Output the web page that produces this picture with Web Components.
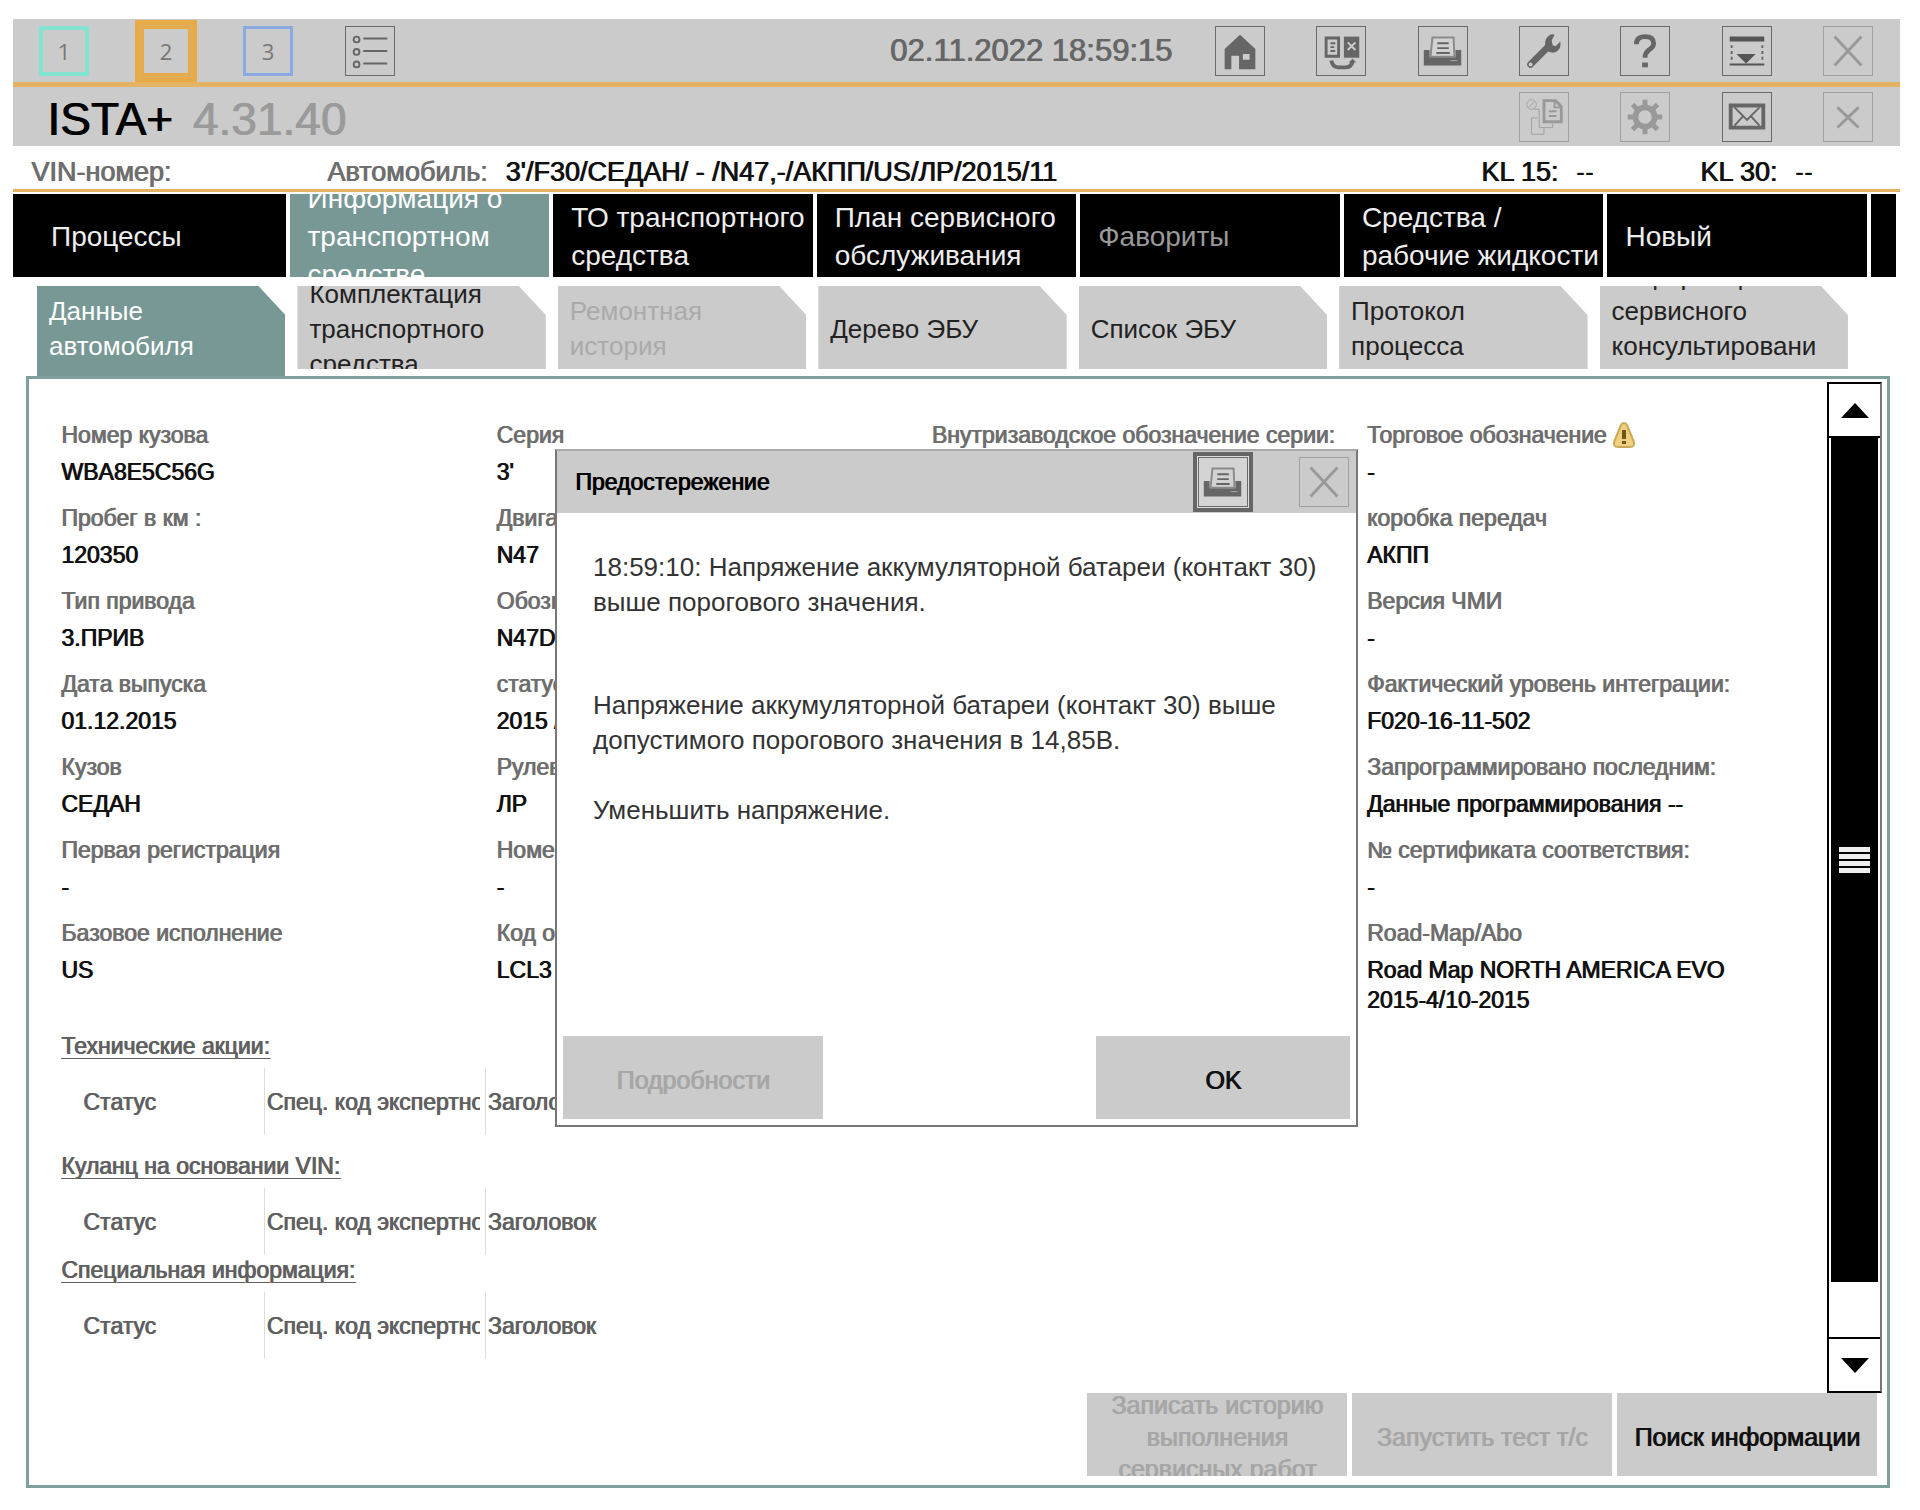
<!DOCTYPE html>
<html lang="ru">
<head>
<meta charset="utf-8">
<title>ISTA+</title>
<style>
:root{
  --grey:#cbcbcb; --teal:#789896; --orange:#e3b262; --label:#6e6e6e; --ink:#111; --off:#a6a6a6;
}
*{box-sizing:border-box}
body{margin:0;background:#fff;color:var(--ink);font:23px/30px "Liberation Sans",Arial,sans-serif}
</style>
</head>
<body>
<ista-app>
  <ista-titlebar slot="top"></ista-titlebar>
  <ista-brandbar slot="top" name="ISTA+" version="4.31.40"></ista-brandbar>
  <ista-vehicle slot="top"></ista-vehicle>
  <ista-nav slot="top">
    <nav-tile wide>Процессы</nav-tile>
    <nav-tile active>Информация о транспортном средстве</nav-tile>
    <nav-tile>ТО транспортного средства</nav-tile>
    <nav-tile>План сервисного обслуживания</nav-tile>
    <nav-tile off>Фавориты</nav-tile>
    <nav-tile>Средства / рабочие жидкости</nav-tile>
    <nav-tile>Новый</nav-tile>
    <nav-tile empty></nav-tile>
  </ista-nav>
  <ista-tabs slot="top">
    <ista-tab active>Данные автомобиля</ista-tab>
    <ista-tab>Комплектация транспортного средства</ista-tab>
    <ista-tab off>Ремонтная история</ista-tab>
    <ista-tab>Дерево ЭБУ</ista-tab>
    <ista-tab>Список ЭБУ</ista-tab>
    <ista-tab>Протокол процесса</ista-tab>
    <ista-tab>Информация сервисного консультирования</ista-tab>
  </ista-tabs>
  <ista-panel>
    <info-grid>
      <info-item label="Номер кузова">WBA8E5C56G</info-item>
      <info-item label="Серия">3'</info-item>
      <info-item label="Внутризаводское обозначение серии:"></info-item>
      <info-item label="Торговое обозначение" warn>-</info-item>

      <info-item label="Пробег в км :">120350</info-item>
      <info-item label="Двига">N47</info-item>
      <info-item></info-item>
      <info-item label="коробка передач">АКПП</info-item>

      <info-item label="Тип привода">3.ПРИВ</info-item>
      <info-item label="Обозн">N47D</info-item>
      <info-item></info-item>
      <info-item label="Версия ЧМИ">-</info-item>

      <info-item label="Дата выпуска">01.12.2015</info-item>
      <info-item label="статус">2015 /</info-item>
      <info-item></info-item>
      <info-item label="Фактический уровень интеграции:">F020-16-11-502</info-item>

      <info-item label="Кузов">СЕДАН</info-item>
      <info-item label="Рулев">ЛР</info-item>
      <info-item></info-item>
      <info-item label="Запрограммировано последним:">Данные программирования --</info-item>

      <info-item label="Первая регистрация">-</info-item>
      <info-item label="Номе">-</info-item>
      <info-item></info-item>
      <info-item label="№ сертификата соответствия:">-</info-item>

      <info-item label="Базовое исполнение">US</info-item>
      <info-item label="Код о">LCL3</info-item>
      <info-item></info-item>
      <info-item label="Road-Map/Abo">Road Map NORTH AMERICA EVO 2015-4/10-2015</info-item>
    </info-grid>
    <action-list heading="Технические акции:"></action-list>
    <action-list heading="Куланц на основании VIN:"></action-list>
    <action-list heading="Специальная информация:" tight></action-list>
    <ista-button slot="actions" off>Записать историю выполнения сервисных работ</ista-button>
    <ista-button slot="actions" off>Запустить тест т/с</ista-button>
    <ista-button slot="actions">Поиск информации</ista-button>
  </ista-panel>
  <warning-dialog slot="overlay" heading="Предостережение">
    <p>18:59:10: Напряжение аккумуляторной батареи (контакт 30) выше порогового значения.</p>
    <p>Напряжение аккумуляторной батареи (контакт 30) выше допустимого порогового значения в 14,85В.</p>
    <p>Уменьшить напряжение.</p>
  </warning-dialog>
</ista-app>

<script>
const BASE = `
*{box-sizing:border-box}
:host([hidden]){display:none}
button{font:inherit;color:inherit;margin:0;padding:0;border:0;background:none;border-radius:0;text-align:inherit}
svg{display:block}
.strong{text-shadow:1px 0 currentColor}
`;
function define(name, render){
  customElements.define(name, class extends HTMLElement{
    constructor(){ super(); this.attachShadow({mode:'open'}); }
    connectedCallback(){
      const t = document.createElement('template');
      t.innerHTML = render(this);
      const s = document.createElement('style');
      s.textContent = BASE;
      this.shadowRoot.replaceChildren(s, t.content.cloneNode(true));
    }
  });
}

const ICONS = {
  list:`<g fill="none" stroke="#666" stroke-width="2"><circle cx="11" cy="13" r="3"/><circle cx="11" cy="26" r="3"/><circle cx="11" cy="39" r="3"/><path d="M18 12h25M18 25h25M18 38h25"/></g>`,
  home:`<path fill="#666" fill-rule="evenodd" d="M25 8 41 23v21H24V30h-8v14H9V23zM28 28v6h7v-6z"/>`,
  docs:`<path fill="#666" fill-rule="evenodd" d="M8 10h16v22H8zM11 13v16h10V13z"/><path fill="#666" d="M28 10h16v22H28z"/><path d="M14 17h5M14 21h4M14 25h5" stroke="#666" stroke-width="2"/><path d="m32 16 8 8m0-8-8 8" stroke="#cbcbcb" stroke-width="2"/><path d="M15 35q1 7 7 7h7q7 0 8-6" fill="none" stroke="#666" stroke-width="4"/><path fill="#666" d="m33 37 4-4 4 4z"/>`,
  print:`<path fill="#666" d="M5 24h6v7h27v-7h6v16H5z"/><path fill="#d2d2d2" stroke="#8a8a8a" stroke-width="2" d="M14 11h22l1 20H12z"/><path d="M19 17h12M19 22h12M18 27h14" stroke="#666" stroke-width="2"/><path d="M33 35h7" stroke="#aaa"/>`,
  wrench:`<path d="M11 39 30 20" stroke="#666" stroke-width="7" stroke-linecap="round"/><path fill="#666" d="M27 24q-3-11 3-15 3-2 6-1l-3 6 1 5 3 1 5-5q1 7-3 10-5 4-12-1z"/><circle cx="11" cy="39" r="2" fill="#cbcbcb"/>`,
  help:`<path d="M16 18q0-8 9-8t9 7q0 4-5 7-4 3-4 8" fill="none" stroke="#666" stroke-width="5"/><path fill="#666" d="M22 37h6v5h-6z"/>`,
  dock:`<path fill="#555" d="M7 10h36v5H7zM14 28h20L24 38zM7 38h36v2H7z"/><path d="M9 19v18M41 19v18" stroke="#666" stroke-width="2" stroke-dasharray="3 3"/>`,
  close:`<path d="m11 10 28 30M39 10 11 40" stroke="#999" stroke-width="3"/>`,
  closeSmall:`<path d="m14 15 22 21M36 15 14 36" stroke="#999" stroke-width="3"/>`,
  tree:`<g fill="none" stroke="#a0a0a0"><circle cx="12" cy="12" r="5"/><path d="m9 15 6-6M15 17h5v19h14v-4M18 26h-6v17h13v-7"/></g><path fill="none" stroke="#999" stroke-width="3" d="M25 8h12l6 6v16H25z"/><path stroke="#999" stroke-width="2" fill="none" d="M36 8v7h7M30 19h8M30 24h8"/>`,
  gear:`<g fill="none" stroke="#999"><circle cx="25" cy="25" r="10" stroke-width="6"/><path stroke-width="5" d="M25 7v7M25 36v7M7 25h7M36 25h7M12 12l5 5M33 33l5 5M38 12l-5 5M17 33l-5 5"/></g>`,
  mail:`<path fill="none" stroke="#666" stroke-width="4" d="M8 13h34v23H8z"/><path fill="none" stroke="#666" stroke-width="2" d="m12 15 13 13 13-13M12 34l9-10M38 34l-9-10"/>`
};

/* A framed square tool button: icon="name", tone, or slotted digit. */
define('tool-button', el => {
  const off = el.hasAttribute('off');
  const icon = el.getAttribute('icon');
  return `<style>
    :host{display:block;width:50px;height:50px;flex:none;--tone:${off?'#a0a0a0':'#6a6a6a'}}
    :host([tone=mint]){--tone:#84e4d2}
    :host([tone=blue]){--tone:#8aaae2}
    :host([tone=amber]){--tone:#e6aa46}
    button{display:grid;place-items:center;width:100%;height:100%;border:1px solid var(--tone);font:22px/30px "Open Sans",sans-serif;color:#777}
    :host([tone]) button{border-width:3px}
    :host([tone=mint]) button{border-width:4px}
    :host([tone=amber]) button{box-shadow:0 0 0 1px #d8b070,0 0 0 6px var(--tone)}
    :host([focused]) button{background:#d4d4d4;box-shadow:0 0 0 1px #ddd,0 0 0 5px #666}
    svg{width:100%;height:100%}
  </style><button type="button" aria-label="${el.getAttribute('label')||''}" ${off?'disabled':''}>${icon?`<svg viewBox="0 0 50 50" aria-hidden="true">${ICONS[icon]}</svg>`:'<slot></slot>'}</button>`;
});

define('ista-app', () => `<style>
  :host{display:block;position:relative;padding:19px 20px 22px 13px}
  main{padding:0 10px 0 13px}
</style><slot name="top"></slot><main><slot></slot></main><slot name="overlay"></slot>`);

define('ista-titlebar', () => `<style>
  :host{display:flex;height:68px;padding:7px 27px 0 26px;background:var(--grey);border-bottom:5px solid var(--orange)}
  .left{display:flex;gap:52px;flex:1}
  .tools{display:flex;justify-content:space-between;width:658px}
  time{font-size:31px;line-height:50px;color:#666;margin-right:43px}
</style>
<div class="left"><tool-button tone="mint">1</tool-button><tool-button tone="amber">2</tool-button><tool-button tone="blue">3</tool-button><tool-button icon="list" label="Список"></tool-button></div>
<time class="strong" datetime="2022-11-02T18:59:15">02.11.2022 18:59:15</time>
<div class="tools"><tool-button icon="home" label="Домой"></tool-button><tool-button icon="docs" label="Операции"></tool-button><tool-button icon="print" label="Печать"></tool-button><tool-button icon="wrench" label="Настройки"></tool-button><tool-button icon="help" label="Справка"></tool-button><tool-button icon="dock" label="Свернуть"></tool-button><tool-button icon="close" off label="Закрыть"></tool-button></div>`);

define('ista-brandbar', el => `<style>
  :host{display:flex;justify-content:space-between;height:59px;padding:5px 27px 0 34px;background:var(--grey)}
  .tools{display:flex;justify-content:space-between;width:354px}
  h1{margin:0;font-size:46px;line-height:54px;font-weight:400;color:#000}
  span{color:#9a9a9a;margin-left:7px}
</style>
<h1 class="strong">${el.getAttribute('name')} <span>${el.getAttribute('version')}</span></h1>
<div class="tools"><tool-button icon="tree" off label="Структура"></tool-button><tool-button icon="gear" off label="Параметры"></tool-button><tool-button icon="mail" label="Почта"></tool-button><tool-button icon="closeSmall" off label="Закрыть"></tool-button></div>`);

define('ista-vehicle', () => `<style>
  :host{display:flex;height:46px;padding:6px 87px 0 18px;border-bottom:3px solid var(--orange);font-size:27px;line-height:40px;white-space:nowrap}
  .vin{width:296px;color:var(--label)}
  .car{color:var(--label);margin-right:18px}
  .val{flex:1}
  .kl{display:flex;gap:18px;margin-left:106px}
</style>
<span class="vin strong">VIN-номер:</span><span class="car strong">Автомобиль:</span><span class="val strong">3'/F30/СЕДАН/ - /N47,-/АКПП/US/ЛР/2015/11</span>
<span class="kl"><span class="strong">KL 15:</span><span>--</span></span><span class="kl"><span class="strong">KL 30:</span><span>--</span></span>`);

define('ista-nav', () => `<style>
  :host{display:block;padding:2px 4px 0 0}
  nav{display:grid;grid-template-columns:273fr repeat(6,260fr) 25fr;gap:4px;height:83px}
</style><nav><slot></slot></nav>`);

define('nav-tile', el => `<style>
  :host{display:block;min-width:0;height:83px;background:#000;color:#eee;font-size:28px;line-height:38px}
  :host([active]){background:var(--teal);color:#fff}
  :host([off]){color:#999}
  button{display:flex;align-items:center;width:100%;height:100%;padding:2px 2px 0 18px;overflow:hidden}
  :host([wide]) button{padding-left:38px}
</style>${el.hasAttribute('empty')?'':`<button type="button" ${el.hasAttribute('off')?'disabled':''}><span><slot></slot></span></button>`}`);

define('ista-tabs', () => `<style>
  :host{display:flex;gap:12px;height:90px;padding:0 52px 0 24px;margin-top:9px}
</style><slot></slot>`);

define('ista-tab', el => `<style>
  :host{display:block;flex:1 1 0;min-width:0;height:83px;background:var(--grey);color:#222;font-size:26px;line-height:35px;clip-path:polygon(0 0,calc(100% - 27px) 0,100% 29px,100% 100%,0 100%)}
  :host([active]){height:90px;background:var(--teal);color:#fff}
  :host([off]){color:#aaa}
  button{display:flex;align-items:center;width:100%;height:83px;padding:3px 21px 0 12px;overflow:hidden}
  span{min-width:0;overflow-wrap:anywhere}
</style><button type="button" ${el.hasAttribute('off')?'disabled':''}><span><slot></slot></span></button>`);

define('ista-panel', () => `<style>
  :host{display:block;border:3px solid #7f9f9d;padding:3px 5px 9px 6px}
  .body{display:flex}
  .content{flex:1;min-width:0;padding:38px 25px 34px 26px}
  footer{display:flex;justify-content:flex-end;gap:5px;padding-right:5px}
</style>
<div class="body"><div class="content"><slot></slot></div><ista-scrollbar></ista-scrollbar></div>
<footer><slot name="actions"></slot></footer>`);

define('ista-scrollbar', () => `<style>
  :host{display:flex;flex-direction:column;width:55px;border:2px solid #000;border-right-color:#777;flex:none}
  button{display:grid;place-items:center;height:52px;flex:none}
  .track{flex:1;display:flex;flex-direction:column;border:solid #000;border-width:2px 0;padding:0 2px}
  .thumb{flex:844;display:flex;flex-direction:column;justify-content:center;align-items:center;gap:2px;background:#000}
  .thumb i{width:31px;height:5px;background:#eee}
  .rest{flex:55}
</style>
<button type="button" aria-label="Вверх"><svg width="28" height="15"><path d="M0 15 14 0l14 15z"/></svg></button>
<div class="track"><div class="thumb"><i></i><i></i><i></i><i></i></div><div class="rest"></div></div>
<button type="button" aria-label="Вниз"><svg width="28" height="15"><path d="M0 0h28L14 15z"/></svg></button>`);

define('info-grid', () => `<style>
  :host{display:grid;grid-template-columns:repeat(4,minmax(0,1fr));row-gap:16px}
</style><slot></slot>`);

define('info-item', el => `<style>
  :host{display:block;min-width:0}
  .label{display:flex;align-items:center;gap:6px;height:30px;margin-bottom:7px;color:var(--label);white-space:nowrap}
  .value{min-height:30px;padding-right:24px}
</style>
<div class="label"><span class="strong">${el.getAttribute('label')||''}</span>${el.hasAttribute('warn')?`<svg width="24" height="28" viewBox="0 0 24 28" aria-hidden="true"><path d="M12 2q2 0 3 2l7 17q1 5-4 5H6q-5 0-4-5L9 4q1-2 3-2z" fill="#f0d080" stroke="#c9a85a" stroke-width="2"/><path d="M12 9v9M12 20v3" stroke="#6b5518" stroke-width="4"/></svg>`:''}</div>
<div class="value strong"><slot></slot></div>`);

define('action-list', el => `<style>
  :host{display:block;margin-top:16px;color:#606060}
  :host([tight]){margin-top:0}
  h2{margin:0 0 7px;font-size:23px;line-height:30px;font-weight:400;text-decoration:underline;text-underline-offset:4px;text-decoration-thickness:1px}
  table{border-collapse:collapse;table-layout:fixed;width:600px}
  th{height:67px;padding:0 5px 0 2px;font-weight:400;text-align:left;white-space:nowrap;overflow:hidden;border-left:1px solid #ddd}
  th div{overflow:hidden}
  th:first-child{border:0;padding-left:22px}
</style>
<h2 class="strong">${el.getAttribute('heading')}</h2>
<table class="strong"><colgroup><col style="width:203px"><col style="width:221px"><col></colgroup>
<thead><tr><th scope="col">Статус</th><th scope="col"><div>Спец. код экспертно</div></th><th scope="col">Заголовок</th></tr></thead></table>`);

define('ista-button', el => `<style>
  :host{display:block;width:260px;height:83px;background:var(--grey);color:#111;font-size:25px;line-height:32px}
  :host([off]){color:var(--off)}
  button{display:flex;align-items:center;justify-content:center;width:100%;height:100%;padding:4px 10px 0;overflow:hidden;text-align:center}
</style><button type="button" class="strong" ${el.hasAttribute('off')?'disabled':''}><span><slot></slot></span></button>`);

define('warning-dialog', el => `<style>
  :host{display:flex;flex-direction:column;position:absolute;left:calc(50% - 405px);top:449px;width:803px;height:678px;background:#fff;border:2px solid #777;border-top-color:#aaa;font-size:26px;line-height:35px;color:#333}
  header{display:flex;align-items:center;height:62px;padding:0 7px 0 18px;background:var(--grey)}
  h2{flex:1;margin:0;font-size:23px;line-height:30px;font-weight:400;color:#000}
  tool-button + tool-button{margin-left:51px}
  .text{flex:1;padding:37px 36px 0}
  ::slotted(p){margin:0 0 35px}
  ::slotted(p:first-child){margin-bottom:68px}
  footer{display:flex;justify-content:space-between;padding:6px}
  footer ista-button:last-child{width:254px}
</style>
<header><h2 class="strong">${el.getAttribute('heading')}</h2><tool-button icon="print" focused label="Печать"></tool-button><tool-button icon="close" off label="Закрыть"></tool-button></header>
<div class="text" role="alert"><slot></slot></div>
<footer><ista-button off>Подробности</ista-button><ista-button>OK</ista-button></footer>`);
</script>
</body>
</html>
